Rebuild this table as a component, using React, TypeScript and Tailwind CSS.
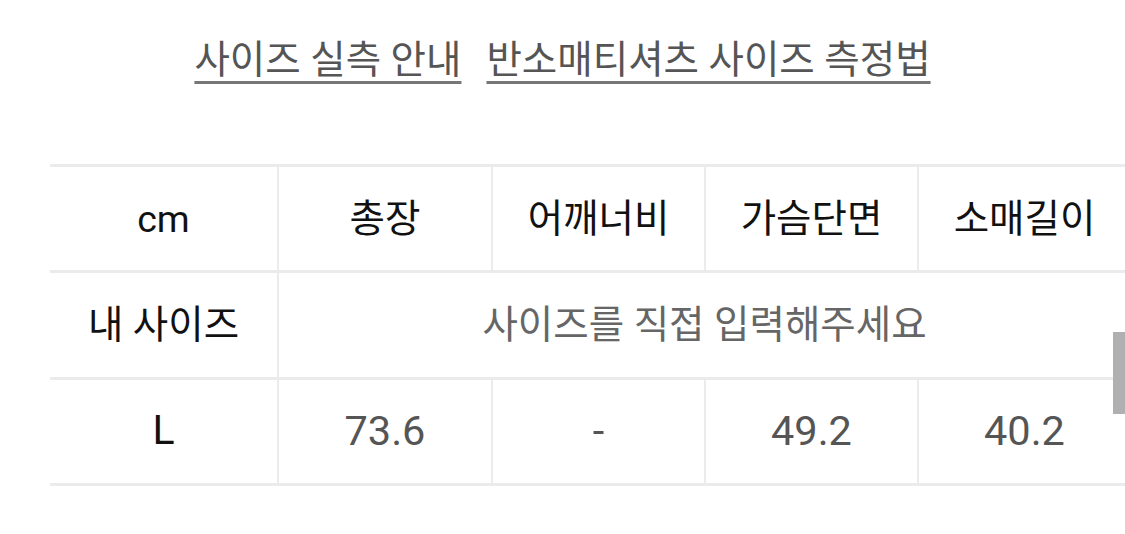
import React from 'react';

const FONT = "font-['Roboto','Noto_Sans_CJK_KR',sans-serif]";

const HEADERS = ['총장', '어깨너비', '가슴단면', '소매길이'];
const ROW_L = ['73.6', '-', '49.2', '40.2'];

export default function App() {
  return (
    <div className={`relative w-[1125px] h-[534px] overflow-hidden bg-white ${FONT}`}>
      {/* Guide links */}
      <div className="flex justify-center gap-[25px] pt-[36px] text-[38.5px] leading-[48px] text-[#555]">
        <a className="underline decoration-[3px] decoration-[#777] underline-offset-[8px]">사이즈 실측 안내</a>
        <a className="underline decoration-[3px] decoration-[#777] underline-offset-[8px]">반소매티셔츠 사이즈 측정법</a>
      </div>

      {/* Size table */}
      <div className="mt-[80px] pl-[50px]">
        <div className="grid w-[1080px] grid-cols-[227px_214px_213px_213px_213px] border-t-[3px] border-[#ebebeb]">
          <div className="flex h-[106.3px] items-center justify-center border-b-[3px] border-[#ebebeb] text-[37.5px] text-[#111]">cm</div>
          {HEADERS.map((h) => (
            <div key={h} className="flex h-[106.3px] items-center justify-center border-b-[3px] border-l-2 border-[#ebebeb] text-[38.5px] text-[#111]">
              {h}
            </div>
          ))}

          <div className="flex h-[106.3px] items-center justify-center border-b-[3px] border-[#ebebeb] text-[38.5px] text-[#111]">내 사이즈</div>
          <div className="col-span-4 flex h-[106.3px] items-center justify-center border-b-[3px] border-l-2 border-[#ebebeb] text-[38.5px] text-[#666]">
            사이즈를 직접 입력해주세요
          </div>

          <div className="flex h-[106.3px] items-center justify-center border-b-[3px] border-[#ebebeb] text-[41px] text-[#111]">L</div>
          {ROW_L.map((v, i) => (
            <div key={i} className="flex h-[106.3px] items-center justify-center border-b-[3px] border-l-2 border-[#ebebeb] text-[41.5px] text-[#555]">
              {v}
            </div>
          ))}
        </div>
      </div>

      {/* scrollbar thumb */}
      <div className="absolute right-0 top-[332px] h-[82px] w-[12px] bg-[#b0b0b0]" />
    </div>
  );
}
